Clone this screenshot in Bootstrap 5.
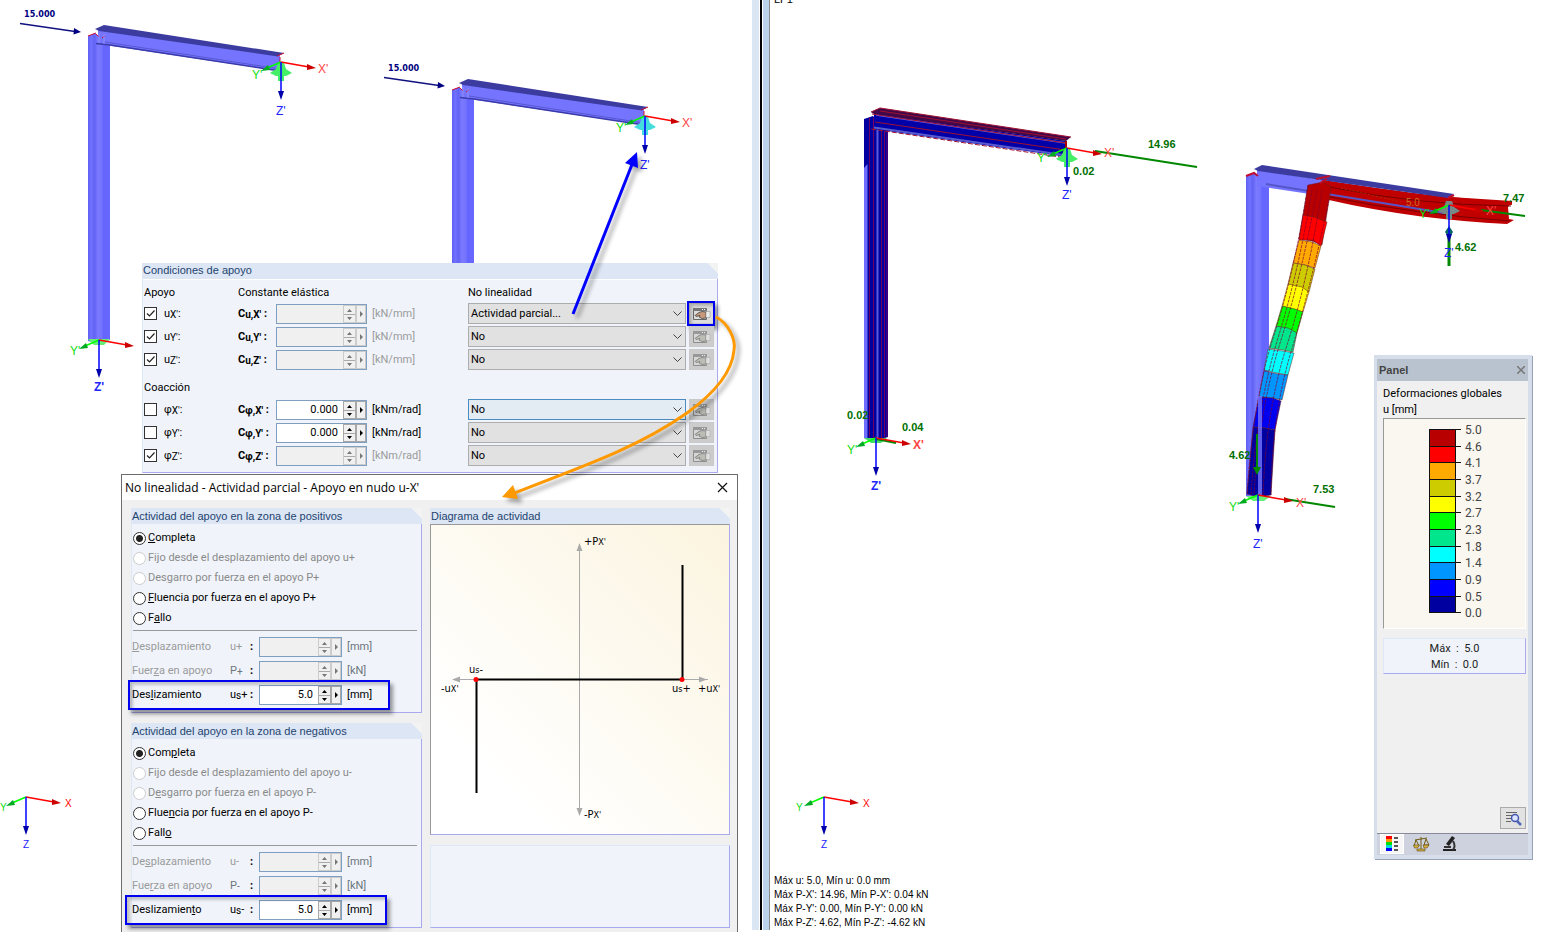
<!DOCTYPE html>
<html lang="es">
<head>
<meta charset="utf-8">
<meta name="viewport" content="width=device-width, initial-scale=1">
<title>Condiciones de apoyo - Actividad parcial</title>
<link href="https://cdn.jsdelivr.net/npm/bootstrap@5.3.0/dist/css/bootstrap.min.css" rel="stylesheet">
<style>
body{font:11px/16px Roboto,"Open Sans",sans-serif;color:#000;background:#fff}
.views{height:100vh}
.view-model{flex:0 0 48.55%}
.view-result{min-width:0}
.scene{position:absolute;inset:0;width:100%;height:100%}
.scene text{font-family:"Liberation Sans",sans-serif}
.over{pointer-events:none;z-index:5}
.splitter{width:18px;margin-bottom:2px;background:linear-gradient(90deg,#dae6f4 0 7px,#fff 7px 8px,#000 8px 10px,#fff 10px 11px,#bad3ea 11px 17px,#8b8b8b 17px)}
.win{position:absolute;z-index:2}
.win-cond{left:142px;top:263px;width:576px}
.win-dlg{left:121px;top:474px;width:617px;background:#f0f0f0;border:1px solid #6c6c6c;height:470px}
.win-title{height:25px;background:#fff;padding:0 4px 0 3px;font:12px/24px "Open Sans",sans-serif}
.x-btn{border:0;background:none;padding:0;line-height:0}
.group{background:#f0f4fa;border:1px solid #dfe8f6;border-right-color:#a9a9f0;border-bottom-color:#a9a9f0}
.group-h{height:16px;margin:-1px -1px 0;padding-left:1px;background:linear-gradient(225deg,#f3f3f3 7px,#dce6f4 8px);color:#1e4470;font:11px/15px "Liberation Sans",sans-serif}
.win-dlg .group-h{line-height:16px}
.cond-grid{display:grid;grid-template-columns:95px 38px 96px 96px 1fr 28px;grid-template-rows:18px repeat(3,23px) 27px repeat(3,23px);align-items:center;padding:4px 3px 5px 0;border-top:1px solid #fff}
.cap,.rowcap{padding-left:1px}
.rowcap{grid-column:1/-1;padding-top:6px}
.tick{display:flex;align-items:center;gap:7px}
.tick input,.opt input{appearance:none;margin:0;width:13px;height:13px;border:1px solid #333;background:#fff;flex:none}
.tick input{margin-left:1px}
.tick input:checked{background:#fff url("data:image/svg+xml,%3Csvg xmlns='http://www.w3.org/2000/svg' viewBox='0 0 11 11'%3E%3Cpath d='M2 5.5l2.5 2.5L9.5 2.5' fill='none' stroke='%23222' stroke-width='1.2'/%3E%3C/svg%3E")}
.idx{font-size:10px;vertical-align:-1px;line-height:1}
.strong{font-weight:bold;white-space:nowrap}
.spin{display:flex;height:20px;width:91px;border:1px solid #7f9fc0;background:#fff}
.spin input{flex:1;min-width:0;border:0;padding:0 5px 0 0;background:none;text-align:right;font:inherit;color:#000}
.spin button{border:1px solid #a8a8a8;background:#f0f0f0;padding:0;width:13px;margin:0;line-height:0}
.spin button+button{width:10px}
.spin.off{background:#f0f0f0}.spin.off button{border-color:#ccc;color:#777}
.spin svg{display:block;margin:auto}
.muted{color:#9a9a9a}
.pick{appearance:none;width:100%;height:21px;border:1px solid #adadad;border-radius:0;padding:0 2px;font:inherit;color:#000;background:#e1e1e1 url("data:image/svg+xml,%3Csvg xmlns='http://www.w3.org/2000/svg' width='9' height='6'%3E%3Cpath d='M.5.5l4 4 4-4' fill='none' stroke='%23444'/%3E%3C/svg%3E") no-repeat right 3px center}
.pick.hot{background-color:#e3ebf3;border-color:#4a8cc0}
.edit{width:25px;height:21px;border:1px solid #c9c9c9;background:#ccc;padding:0;margin-left:3px;line-height:0;color:#b4b4a8;position:relative}
.edit.on{color:#c89878;background:#ddd}
.edit.on::after,.mark-row::after{content:"";position:absolute;border:2px solid #0000f0;box-shadow:3px 4px 4px rgba(0,0,0,.4),inset 3px 3px 3px rgba(0,0,0,.2)}
.edit.on::after{inset:-3px -2px -3px -3px}
.dlg-body{padding:8px 7px 0 9px;gap:8px}
.col-act{width:291px}
.group-act{height:205px;padding:0}
.opt{display:flex;align-items:center;gap:2px;height:20px}
.opt input{border-radius:50%}
.opt input:checked{background:radial-gradient(circle,#222 0 3px,#fff 4px)}
.opt input:disabled{border-color:#ccc}
.opt input:disabled+label{color:#8a8a8a}
.opts{padding:4px 0 0 1px}
.rule{border-top:1px solid #999;margin:2px 4px 4px 1px}
.fld{display:grid;grid-template-columns:98px 29px 88px 1fr;align-items:center;height:24px;position:relative}
.fld .spin{width:83px}
.sym{display:flex;justify-content:space-between;white-space:nowrap;width:23px}
.mark-row::after{left:-4px;right:31px;top:-3px;bottom:-3px}
.mark-row.shift::after{left:-7px;right:34px}
.diagram{border:1px solid #999;border-right-color:#a9a9f0;border-bottom-color:#a9a9f0;background:linear-gradient(45deg,#fff 20%,#fbf4df);height:311px}
.diagram svg{display:block}
.spare{height:83px;margin-top:10px}
.legend{right:17px;top:355px;width:158px;background:#f0f0f0;border:solid #d5deea;border-width:4px 4px 4px 3px;box-shadow:1px 1px 0 #98a2b6}
.legend-h{height:22px;background:#b9c3cf;padding:0 3px 0 2px;color:#444;font:bold 11px/22px "Liberation Sans",sans-serif}
.legend-b{padding:5px 2px 0 6px;height:452px}
.scale{background:#faf7f0;border:1px solid #999;border-right-color:#fff;border-bottom-color:#fff;height:211px}
.scale text{font:12px Roboto,sans-serif;fill:#444}
.minmax{margin-top:9px;height:36px;padding-top:2px;line-height:16px;color:#222}
.tabs{height:22px;background:#cdd2de;border-top:1px solid #889;padding-left:3px;gap:5px}
.tabs button{border:0;background:none;padding:0;width:24px;height:20px;line-height:0}
.tabs .sel{background:#f6f6f6;border:1px solid #fff}
.find{width:26px;height:22px;border:1px solid #aaa;background:#e2e2e2;padding:0;line-height:0}
.status{font:10px/14px "Liberation Sans",sans-serif;padding:0 0 2px 4px;z-index:2}
.num{font-weight:bold;font-size:11px}
.axl{font-size:12px}
</style>
</head>
<body>
<svg width="0" height="0" class="position-absolute" aria-hidden="true">
<defs>
<g id="ud"><path d="M3 6L5.500 3 8 6zM3 11L5.500 14 8 11z" fill="currentColor"/><path d="M0 8.500h11" stroke="#aaa"/></g>
<g id="rt"><path d="M2 1L5 4 2 7z" fill="currentColor"/></g>
<g id="hand"><path d="M1.500 3.500h13v11h-13z" fill="#ddd" stroke="#666"/><path d="M1 3h14v3H1z" fill="#777"/><path d="M10 4.500h1M12 4.500h1" stroke="#fff"/><path d="M14 7L10 6.500 7 7.500 3 10.500l1 1 4-1-1 1.500 3 1.500 4-.5z" fill="currentColor" stroke="#444" stroke-width=".8"/><path d="M14 6.500h4v6h-4z" fill="#eee" stroke="#888" stroke-width=".5"/></g>
<g id="ax"><path d="M0 0L28 5" stroke="#f00" stroke-width="1.500"/><path d="M26 2l9 4-9 2z" fill="#c00"/><path d="M0 0L-14 6" stroke="#0f0" stroke-width="1.500"/><path d="M-20 9l7-6 2 5z" fill="#0a2"/><path d="M0 0V30" stroke="#00f" stroke-width="1.500"/><path d="M-3 29h6L0 38z" fill="#00a"/></g>
<g id="sup"><path d="M-3 2h6l2 6 6 4-6 3H3v5h-6v-5h-2l-6-3 6-4z"/></g>
<linearGradient id="col"><stop offset="0" stop-color="#5f5ff5"/><stop offset=".15" stop-color="#7272ff"/><stop offset=".3" stop-color="#6262f4"/><stop offset=".45" stop-color="#7b7bff"/><stop offset=".65" stop-color="#7272ff"/><stop offset=".7" stop-color="#6464ff"/><stop offset="1" stop-color="#6868ff"/></linearGradient>
<g id="frame"><path d="M88 36l7-3 4 3 11 2V340l-11 4-11-3z" fill="url(#col)"/><path d="M98 30l182 26v15L98 44z" fill="#7474ff"/><path d="M95 29l9-4 180 28-6 3.500L99 31z" fill="#3c3ca0"/><path d="M96 43.500l14 1.500 170 26" stroke="#3a3aa8" stroke-width="1.500" fill="none"/><path d="M105 42l175 27" stroke="#5858d0" fill="none"/><path d="M88 36l8-3M96 34l3 3M102 38l3-2M277 56l7-3M280 57v5M277 71h3" stroke="#d01030" fill="none"/><path d="M99 33v10M104 34v10" stroke="#9090ff"/></g>
<g id="load"><path d="M20 23.500L75 31.500" stroke="#101080" stroke-width="1.500"/><path d="M74 28l7 4-7.500 2.500z" fill="#000080"/><text x="24" y="17" style="font:bold 9px 'DejaVu Sans Condensed',sans-serif" fill="#000080">15.000</text></g>
</defs>
</svg>
<main class="views d-flex overflow-hidden">
<section class="view-model position-relative overflow-hidden" aria-label="Modelo">
<svg class="scene" aria-hidden="true">
<use href="#frame"/><use href="#frame" x="364" y="54"/>
<use href="#load"/><use href="#load" x="364" y="54"/>
<use href="#sup" x="281" y="61" fill="#4e6"/><use href="#sup" x="645" y="115" fill="#4dd"/>
<path d="M88 339h22l-6 6H94z" fill="#6e7"/>
<use href="#ax" x="281" y="62"/><use href="#ax" x="645" y="116"/><use href="#ax" x="99" y="340"/><use href="#ax" x="26" y="797"/>
<g class="axl"><g fill="#f44"><text x="318" y="73">X'</text><text x="682" y="127">X'</text></g><text x="65" y="807" font-size="10" fill="#f00">X</text>
<g fill="#1d1"><text x="252" y="79">Y'</text><text x="616" y="132">Y'</text><text x="70" y="355">Y'</text><text x="0" y="811" font-size="10">Y</text></g>
<g fill="#22f"><text x="276" y="115">Z'</text><text x="640" y="169">Z'</text><text x="94" y="391" font-weight="bold">Z'</text><text x="23" y="848" font-size="10">Z</text></g></g>
</svg>

<section class="win win-cond group">
<div class="group-h">Condiciones de apoyo</div>
<div class="cond-grid">
<div class="cap">Apoyo</div><div class="cap ps-0" style="grid-column:2/5">Constante elástica</div><div class="cap ps-0" style="grid-column:5/7">No linealidad</div>

<div class="tick"><input type="checkbox" id="ux" checked><label for="ux">u<span class="idx">X'</span>:</label></div><label class="strong" for="cux">C<span class="idx">u,X'</span> :</label><div class="spin off"><input id="cux" disabled><button disabled aria-label="Cambiar"><svg width="11" height="17"><use href="#ud"/></svg></button><button disabled aria-label="Más"><svg width="7" height="8"><use href="#rt"/></svg></button></div><span class="muted">[kN/mm]</span><select class="pick" aria-label="No linealidad uX"><option>Actividad parcial...</option></select><button class="edit on" aria-label="Editar uX"><svg width="19" height="17"><use href="#hand"/></svg></button>

<div class="tick"><input type="checkbox" id="uy" checked><label for="uy">u<span class="idx">Y'</span>:</label></div><label class="strong" for="cuy">C<span class="idx">u,Y'</span> :</label><div class="spin off"><input id="cuy" disabled><button disabled aria-label="Cambiar"><svg width="11" height="17"><use href="#ud"/></svg></button><button disabled aria-label="Más"><svg width="7" height="8"><use href="#rt"/></svg></button></div><span class="muted">[kN/mm]</span><select class="pick" aria-label="No linealidad uY"><option>No</option></select><button class="edit" disabled aria-label="Editar uY"><svg width="19" height="17" opacity=".6"><use href="#hand"/></svg></button>

<div class="tick"><input type="checkbox" id="uz" checked><label for="uz">u<span class="idx">Z'</span>:</label></div><label class="strong" for="cuz">C<span class="idx">u,Z'</span> :</label><div class="spin off"><input id="cuz" disabled><button disabled aria-label="Cambiar"><svg width="11" height="17"><use href="#ud"/></svg></button><button disabled aria-label="Más"><svg width="7" height="8"><use href="#rt"/></svg></button></div><span class="muted">[kN/mm]</span><select class="pick" aria-label="No linealidad uZ"><option>No</option></select><button class="edit" disabled aria-label="Editar uZ"><svg width="19" height="17" opacity=".6"><use href="#hand"/></svg></button>

<div class="rowcap">Coacción</div>

<div class="tick"><input type="checkbox" id="px"><label for="px">φ<span class="idx">X'</span>:</label></div><label class="strong" for="cpx">C<span class="idx">φ,X'</span> :</label><div class="spin"><input id="cpx" value="0.000"><button aria-label="Cambiar"><svg width="11" height="17"><use href="#ud"/></svg></button><button aria-label="Más"><svg width="7" height="8"><use href="#rt"/></svg></button></div><span>[kNm/rad]</span><select class="pick hot" aria-label="No linealidad φX"><option>No</option></select><button class="edit" disabled aria-label="Editar φX"><svg width="19" height="17" opacity=".6"><use href="#hand"/></svg></button>

<div class="tick"><input type="checkbox" id="py"><label for="py">φ<span class="idx">Y'</span>:</label></div><label class="strong" for="cpy">C<span class="idx">φ,Y'</span> :</label><div class="spin"><input id="cpy" value="0.000"><button aria-label="Cambiar"><svg width="11" height="17"><use href="#ud"/></svg></button><button aria-label="Más"><svg width="7" height="8"><use href="#rt"/></svg></button></div><span>[kNm/rad]</span><select class="pick" aria-label="No linealidad φY"><option>No</option></select><button class="edit" disabled aria-label="Editar φY"><svg width="19" height="17" opacity=".6"><use href="#hand"/></svg></button>

<div class="tick"><input type="checkbox" id="pz" checked><label for="pz">φ<span class="idx">Z'</span>:</label></div><label class="strong" for="cpz">C<span class="idx">φ,Z'</span> :</label><div class="spin off"><input id="cpz" disabled><button disabled aria-label="Cambiar"><svg width="11" height="17"><use href="#ud"/></svg></button><button disabled aria-label="Más"><svg width="7" height="8"><use href="#rt"/></svg></button></div><span class="muted">[kNm/rad]</span><select class="pick" aria-label="No linealidad φZ"><option>No</option></select><button class="edit" disabled aria-label="Editar φZ"><svg width="19" height="17" opacity=".6"><use href="#hand"/></svg></button>
</div>
</section>

<section class="win win-dlg">
<div class="win-title d-flex justify-content-between align-items-center"><span>No linealidad - Actividad parcial - Apoyo en nudo u-X'</span><button class="x-btn p-1" aria-label="Cerrar"><svg width="13" height="13"><path d="M2 2l9 9M11 2l-9 9" stroke="#111" stroke-width="1.200"/></svg></button></div>
<div class="dlg-body d-flex">
<div class="col-act d-flex flex-column flex-shrink-0" style="gap:10px">
<div class="group group-act">
<div class="group-h">Actividad del apoyo en la zona de positivos</div>
<div class="opts">
<div class="opt"><input type="radio" name="pos" id="p1" checked><label for="p1"><u>C</u>ompleta</label></div>
<div class="opt"><input type="radio" name="pos" id="p2" disabled><label for="p2">Fijo desde el desplazamiento del apoyo u+</label></div>
<div class="opt"><input type="radio" name="pos" id="p3" disabled><label for="p3">Des<u>g</u>arro por fuerza en el apoyo P+</label></div>
<div class="opt"><input type="radio" name="pos" id="p4"><label for="p4"><u>F</u>luencia por fuerza en el apoyo P+</label></div>
<div class="opt"><input type="radio" name="pos" id="p5"><label for="p5">F<u>a</u>llo</label></div>
</div>
<div class="rule"></div>
<div class="fld"><label class="muted" for="d1"><u>D</u>esplazamiento</label><span class="sym muted"><span>u+</span><b class="text-black">:</b></span><div class="spin off"><input id="d1" disabled><button disabled aria-label="Cambiar"><svg width="11" height="17"><use href="#ud"/></svg></button><button disabled aria-label="Más"><svg width="7" height="8"><use href="#rt"/></svg></button></div><span class="text-secondary">[mm]</span></div>
<div class="fld"><label class="muted" for="d2">Fuer<u>z</u>a en apoyo</label><span class="sym text-secondary"><span>P<span class="idx">+</span></span><b class="text-black">:</b></span><div class="spin off"><input id="d2" disabled><button disabled aria-label="Cambiar"><svg width="11" height="17"><use href="#ud"/></svg></button><button disabled aria-label="Más"><svg width="7" height="8"><use href="#rt"/></svg></button></div><span class="text-secondary">[kN]</span></div>
<div class="fld mark-row"><label for="d3">Des<u>l</u>izamiento</label><span class="sym"><span>u<span class="idx">s</span>+</span><b>:</b></span><div class="spin"><input id="d3" value="5.0"><button aria-label="Cambiar"><svg width="11" height="17"><use href="#ud"/></svg></button><button aria-label="Más"><svg width="7" height="8"><use href="#rt"/></svg></button></div><span>[mm]</span></div>
</div>
<div class="group group-act">
<div class="group-h">Actividad del apoyo en la zona de negativos</div>
<div class="opts">
<div class="opt"><input type="radio" name="neg" id="n1" checked><label for="n1">Com<u>p</u>leta</label></div>
<div class="opt"><input type="radio" name="neg" id="n2" disabled><label for="n2">Fijo desde el desplazamiento del apoyo u-</label></div>
<div class="opt"><input type="radio" name="neg" id="n3" disabled><label for="n3">D<u>e</u>sgarro por fuerza en el apoyo P-</label></div>
<div class="opt"><input type="radio" name="neg" id="n4"><label for="n4">Flue<u>n</u>cia por fuerza en el apoyo P-</label></div>
<div class="opt"><input type="radio" name="neg" id="n5"><label for="n5">Fall<u>o</u></label></div>
</div>
<div class="rule"></div>
<div class="fld"><label class="muted" for="e1">De<u>s</u>plazamiento</label><span class="sym muted"><span>u-</span><b class="text-black">:</b></span><div class="spin off"><input id="e1" disabled><button disabled aria-label="Cambiar"><svg width="11" height="17"><use href="#ud"/></svg></button><button disabled aria-label="Más"><svg width="7" height="8"><use href="#rt"/></svg></button></div><span class="text-secondary">[mm]</span></div>
<div class="fld"><label class="muted" for="e2">Fue<u>r</u>za en apoyo</label><span class="sym text-secondary"><span>P<span class="idx">-</span></span><b class="text-black">:</b></span><div class="spin off"><input id="e2" disabled><button disabled aria-label="Cambiar"><svg width="11" height="17"><use href="#ud"/></svg></button><button disabled aria-label="Más"><svg width="7" height="8"><use href="#rt"/></svg></button></div><span class="text-secondary">[kN]</span></div>
<div class="fld mark-row shift"><label for="e3">Deslizamien<u>t</u>o</label><span class="sym"><span>u<span class="idx">s</span>-</span><b>:</b></span><div class="spin"><input id="e3" value="5.0"><button aria-label="Cambiar"><svg width="11" height="17"><use href="#ud"/></svg></button><button aria-label="Más"><svg width="7" height="8"><use href="#rt"/></svg></button></div><span>[mm]</span></div>
</div>
</div>
<div class="flex-grow-1">
<div class="group-h mt-0 mx-0">Diagrama de actividad</div>
<div class="diagram">
<svg width="100%" height="309">
<path d="M148.500 22v268M22 154.500h255" stroke="#aaa"/>
<path d="M145.500 26l3-8 3 8zM145.500 283l3 8 3-8zM29 151.500l-8 3 8 3zM268 151.500l8 3-8 3z" fill="#aaa"/>
<path d="M45.500 268V154.500H251.500V40" fill="none" stroke="#000" stroke-width="2"/>
<circle cx="45" cy="154.500" r="2.500" fill="red"/><circle cx="251" cy="154.500" r="2.500" fill="red"/>
<g style="font:11px 'DejaVu Sans Condensed',sans-serif"><text x="153" y="20">+P<tspan font-size="9">X'</tspan></text><text x="153" y="293">-P<tspan font-size="9">X'</tspan></text><text x="38" y="148">u<tspan font-size="9">s</tspan>-</text><text x="10" y="167">-u<tspan font-size="9">X'</tspan></text><text x="241" y="167">u<tspan font-size="9">s</tspan>+</text><text x="267" y="167">+u<tspan font-size="9">X'</tspan></text></g>
</svg>
</div>
<div class="group spare"></div>
</div>
</div>
</section>

<svg class="scene over" aria-hidden="true">
<g style="filter:drop-shadow(4px 4px 2px rgba(0,0,0,.35))"><path d="M573 314L633 162" stroke="#00f" stroke-width="3"/><path d="M637 152l-12 11 13 5z" fill="#00f"/>
<path d="M716 317C728 323 736 339 734 350C732 374 712 395 687 413C640 446 590 464 514 493" fill="none" stroke="#f90" stroke-width="3"/><path d="M502 497l11-12 5 14z" fill="#f90"/></g>
</svg>
</section>
<div class="splitter flex-shrink-0"></div>

<section class="view-result flex-grow-1 position-relative d-flex flex-column justify-content-end" aria-label="Resultados">
<svg class="scene" aria-hidden="true">
<g transform="translate(-770 0)">
<text x="774" y="3" font-size="11">LF1</text>
<path d="M864 119l9-3 3 3 12 3V437l-12 4-12-3z" fill="#0000a0"/>
<path d="M864 168l3.500-4V438h-3.500z" fill="#6e6eff"/><path d="M877.500 122V439" stroke="#5a5ae0" stroke-width="2"/><path d="M869.500 118V437M873.500 118V439M881.500 124V438M884.500 124V438M887 124V437" stroke="#700060"/>
<path d="M874 113l193 28v16L874 129z" fill="#0000a8"/><path d="M874 127.500l193 28" stroke="#8080e0" stroke-width="2" opacity=".7"/>
<path d="M876 115l190 28" stroke="#6464e8" stroke-width="1.500"/>
<path d="M871 112l9-4 191 29-5 4L874 114z" fill="#400848"/><path d="M871 112l9-4 191 29M872 114l194 29M875 122l190 28M880 111l186 28" stroke="#a01030" fill="none"/><path d="M871 129l196 29" stroke="#a01030" stroke-dasharray="5 2"/><path d="M1066 141v16" stroke="#a00" stroke-width="2"/>
<use href="#sup" x="1067" y="147" fill="#4e6"/><path d="M864 438h23l-6 5h-10z" fill="#4d6"/>
<path d="M1095 151L1197 167M876 439l20 4" stroke="#080" stroke-width="2"/>
<path d="M1246 176l8-3 4 3 11 3V495l-12 4-11-3z" fill="url(#col)"/>
<path d="M1257 170l192 29v16L1257 186z" fill="#7474ff"/>
<path d="M1322 180C1370 187 1440 198 1512 202l-4 5 1 12 5 1-7 4C1450 221 1390 214 1329 200z" fill="#c00000"/>
<path d="M1450 199l62 4" stroke="#c00000" stroke-width="4"/>
<path d="M1329 187q90 18 182 19M1330 197q85 17 180 24" stroke="#780000" fill="none"/>
<path d="M1266 184l178 29" stroke="#5555c8" stroke-width="2"/>
<g stroke="#602020" stroke-width=".5">
<path d="M1308 185l15-3 8 5-2 13-7 45-10-4-13-2 4-24z" fill="#b80000"/>
<path d="M1303 215l11 2 13 5-6 24-8-6-14 0z" fill="#f00"/>
<path d="M1299 240l13 2 9 4-6 22-10-3-12-2z" fill="#fa0"/>
<path d="M1293 263l12 2 10 4-6 23-9-3-12-5z" fill="#cc0"/>
<path d="M1288 284l14 3 7 5-6 20-8-2-13-4z" fill="#ff0"/>
<path d="M1282 306l13 3 8 3-6 21-9-3-12-4z" fill="#0f0"/>
<path d="M1276 326l12 2 9 5-4 19-10-2-14-2z" fill="#00e68c"/>
<path d="M1268 349l15 2 11 2-6 22-11-2-13-3z" fill="#0ff"/>
<path d="M1264 371l14 3 10 1-6 25-9-2-14-1z" fill="#0096ff"/>
<path d="M1259 397l14 1 8 3-6 29-10-2-12-1z" fill="#0000f0"/>
<path d="M1253 427l12 1 10 2-4 65-12 2-12-3z" fill="#0000a0"/>
</g>
<path d="M1308 185Q1295 270 1274 335T1247 495M1317 190Q1303 270 1281 340T1254 495M1322 190Q1308 280 1287 345T1263 495M1329 200Q1310 290 1291 352T1271 495M1312 190Q1299 270 1278 338T1251 495" fill="none" stroke="#800030" stroke-opacity=".7" stroke-dasharray="3 1"/>
<path d="M1260 396V498" stroke="#7777ff" stroke-width="4" opacity=".8"/>
<path d="M1254 169l8-4 192 29-6 4L1258 171z" fill="#3c3ca0"/><path d="M1246 176l8-3 4 3M1316 179l14-3M1320 183l7-4M1448 198l6-3" stroke="#c01030" stroke-width="2" fill="none"/>
<path d="M1341 188l60 14" stroke="#a83000" stroke-dasharray="2 2"/><text x="1406" y="206" font-size="10" fill="#c87020">5.0</text>
<use href="#sup" x="1449" y="199" fill="#788"/>
<path d="M1449 235V266" stroke="#080" stroke-width="3"/><path d="M1481 210L1525 216" stroke="#080" stroke-width="2"/><path d="M1445 232l4-6 4 6-4 6z" fill="#066"/>
<path d="M1257 434V470M1285 499L1335 507" stroke="#080" stroke-width="2"/><path d="M1253 467h8l-4 8z" fill="#080"/>
<path d="M1246 496h25l-7 5h-11z" fill="#6e7"/>
<use href="#ax" x="1067" y="148"/><use href="#ax" x="1449" y="205"/><use href="#ax" x="876" y="438"/><use href="#ax" x="1258" y="495"/><use href="#ax" x="824" y="797"/>
<g class="axl"><g fill="#f44"><text x="1104" y="157">X'</text><text x="1486" y="215">X'</text><text x="913" y="449" font-weight="bold">X'</text><text x="1296" y="507">X'</text><text x="863" y="807" font-size="10" fill="#f00">X</text></g>
<g fill="#1d1"><text x="1037" y="162">Y'</text><text x="1419" y="218">Y'</text><text x="847" y="454">Y'</text><text x="1229" y="511">Y'</text><text x="796" y="811" font-size="10">Y</text></g>
<g fill="#22f"><text x="1062" y="199">Z'</text><text x="1444" y="257">Z'</text><text x="871" y="490" font-weight="bold">Z'</text><text x="1253" y="548">Z'</text><text x="821" y="848" font-size="10">Z</text></g></g>
<g class="num" fill="#007000"><text x="1148" y="148">14.96</text><text x="1073" y="175">0.02</text><text x="1503" y="202">7.47</text><text x="1455" y="251">4.62</text><text x="847" y="419">0.02</text><text x="902" y="431">0.04</text><text x="1229" y="459">4.62</text><text x="1313" y="493">7.53</text></g>
</g>
</svg>

<aside class="win legend">
<div class="legend-h d-flex justify-content-between align-items-center"><span>Panel</span><button class="x-btn" aria-label="Cerrar panel"><svg width="8" height="8"><path d="M0 0l8 8M8 0L0 8" stroke="#777" stroke-width="1.500"/></svg></button></div>
<div class="legend-b d-flex flex-column">
<div>Deformaciones globales</div><div>u [mm]</div>
<div class="scale">
<svg width="141" height="205">
<g stroke="none"><path d="M46 10h26v17H46z" fill="#b80000"/><path d="M46 27h26v16H46z" fill="#f00"/><path d="M46 43h26v17H46z" fill="#fa0"/><path d="M46 60h26v17H46z" fill="#cc0"/><path d="M46 77h26v16H46z" fill="#ff0"/><path d="M46 93h26v17H46z" fill="#0f0"/><path d="M46 110h26v17H46z" fill="#00e68c"/><path d="M46 127h26v16H46z" fill="#0ff"/><path d="M46 143h26v17H46z" fill="#0096ff"/><path d="M46 160h26v17H46z" fill="#00f"/><path d="M46 177h26v16H46z" fill="#0000a0"/></g>
<path d="M45.500 10v184M71.500 10v184M45 10.500h32M45 27.500h32M45 43.500h32M45 60.500h32M45 77.500h32M45 93.500h32M45 110.500h32M45 127.500h32M45 143.500h32M45 160.500h32M45 177.500h32M45 193.500h32" stroke="#111" fill="none"/>
<text x="81" y="15">5.0</text><text x="81" y="32">4.6</text><text x="81" y="48">4.1</text><text x="81" y="65">3.7</text><text x="81" y="82">3.2</text><text x="81" y="98">2.7</text><text x="81" y="115">2.3</text><text x="81" y="132">1.8</text><text x="81" y="148">1.4</text><text x="81" y="165">0.9</text><text x="81" y="182">0.5</text><text x="81" y="198">0.0</text>
</svg>
</div>
<div class="group minmax text-center"><div>Máx &nbsp;: &nbsp;5.0</div><div>Mín &nbsp;: &nbsp;0.0</div></div>
<button class="find align-self-end mt-auto mb-1" aria-label="Detalles"><svg width="18" height="18"><path d="M2 3.500h11M2 6.500h6M2 9.500h5M2 12.500h5" stroke="#666"/><circle cx="11" cy="9" r="3.500" fill="#dde4ff" stroke="#4458b0" stroke-width="1.500"/><path d="M13 12l4 4" stroke="#5568b8" stroke-width="2.500"/></svg></button>
</div>
<div class="tabs d-flex">
<button class="sel" aria-label="Escala de colores"><svg width="18" height="18"><path d="M3 1h6v3H3z" fill="red"/><path d="M3 4h6v3H3z" fill="#f90"/><path d="M3 7h6v3H3z" fill="#0d0"/><path d="M3 10h6v3H3z" fill="#0dd"/><path d="M3 13h6v3H3z" fill="#00f"/><path d="M11 3h4M11 7h4M11 11h4M11 15h4" stroke="#555" stroke-width="2"/></svg></button>
<button aria-label="Factores"><svg width="18" height="18"><path d="M9 2v12M3 5l12-2M4 5l-2 6h5L4 5M14 4l-2 6h5l-3-6" fill="none" stroke="#705a10"/><path d="M1.500 10h6l-2 3h-3zM11 10h6l-2 3h-3zM5 14h8v2H5z" fill="#d8b040" stroke="#604c10" stroke-width=".6"/></svg></button>
<button aria-label="Filtro"><svg width="18" height="18"><path d="M11 1l3 2-6 8-3-2zM2 14h13v2H2z" fill="#222"/><path d="M12 6q3 5 0 9M3 12h7" fill="none" stroke="#333" stroke-width="2"/></svg></button>
</div>
</aside>
<div class="status position-relative">Máx u: 5.0, Mín u: 0.0 mm<br>Máx P-X': 14.96, Mín P-X': 0.04 kN<br>Máx P-Y': 0.00, Mín P-Y': 0.00 kN<br>Máx P-Z': 4.62, Mín P-Z': -4.62 kN</div>
</section>
</main>
<script src="https://cdn.jsdelivr.net/npm/bootstrap@5.3.0/dist/js/bootstrap.bundle.min.js"></script>
</body>
</html>
